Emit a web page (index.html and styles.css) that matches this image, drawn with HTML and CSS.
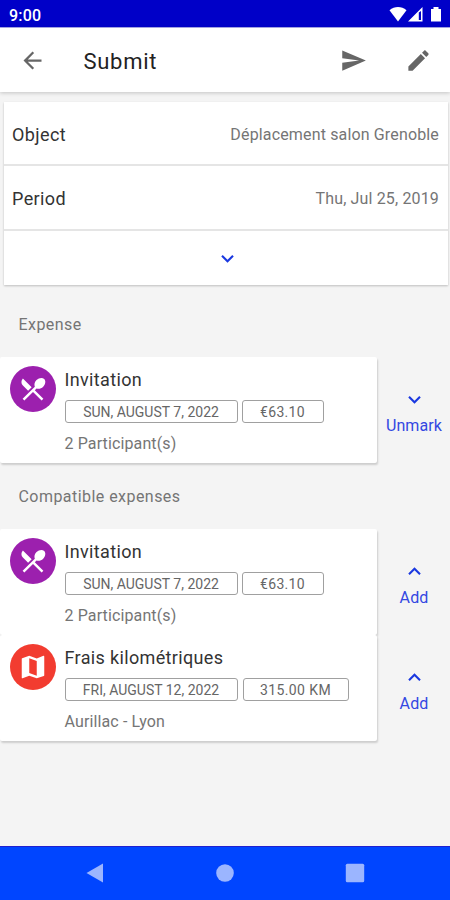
FILE: index.html
```html
<!DOCTYPE html>
<html lang="en">
<head>
<meta charset="utf-8">
<title>Submit</title>
<link rel="stylesheet" href="styles.css">
</head>
<body>
<svg class="defs" aria-hidden="true">
  <symbol id="down" viewBox="0 0 24 24"><path d="M16.59 8.59 12 13.17 7.41 8.59 6 10l6 6 6-6z"/></symbol>
  <symbol id="up" viewBox="0 0 24 24"><path d="m12 8-6 6 1.41 1.41L12 10.83l4.59 4.58L18 14z"/></symbol>
  <symbol id="dining" viewBox="0 0 24 24"><path d="M8.1 13.34l2.83-2.83L3.91 3.5c-1.56 1.56-1.56 4.09 0 5.66l4.19 4.18zm6.78-1.81c1.53.71 3.68.21 5.27-1.38 1.91-1.91 2.28-4.65.81-6.12-1.46-1.46-4.2-1.1-6.12.81-1.59 1.59-2.09 3.74-1.38 5.27L3.7 19.87l1.41 1.41L12 14.41l6.88 6.88 1.41-1.41L13.41 13l1.47-1.47z"/></symbol>
  <symbol id="map" viewBox="0 0 24 24"><path d="M20.5 3l-.16.03L15 5.1 9 3 3.36 4.9c-.21.07-.36.25-.36.48V20.5c0 .28.22.5.5.5l.16-.03L9 18.9l6 2.1 5.64-1.9c.21-.07.36-.25.36-.48V3.5c0-.28-.22-.5-.5-.5zM15 19l-6-2.11V5l6 2.11V19z"/></symbol>
</svg>
<header class="status">
  <span class="time">9:00</span>
  <svg class="status-icons" viewBox="0 0 54 18"><path d="M.5 4.2C5.5-.2 12.500-.2 17.500 4.200L9 15.500z"/><path fill-rule="evenodd" d="M19 15.500 33.500 1V15.500zM29.800 6.500V14H32V5z"/><path d="M42 3h2.500V1h5v2H52v12.500H42z"/></svg>
</header>
<nav class="appbar">
  <svg class="icon" viewBox="0 0 24 24"><path d="M20 11H7.83l5.59-5.59L12 4l-8 8 8 8 1.410-1.410L7.830 13H20z"/></svg>
  <h1>Submit</h1>
  <svg class="icon" viewBox="0 0 24 24"><path d="M2.010 21L23 12 2.010 3 2 10l15 2-15 2z"/></svg>
  <svg class="icon edit" viewBox="0 0 24 24"><path d="M3 17.250V21h3.750L17.810 9.940l-3.750-3.750zM20.710 7.040c.39-.39.39-1.020 0-1.410l-2.340-2.340c-.39-.39-1.020-.39-1.410 0l-1.830 1.830 3.750 3.750z"/></svg>
</nav>
<main>
  <section class="summary">
    <div class="row"><span class="label">Object</span><span class="value">Déplacement salon Grenoble</span></div>
    <div class="row"><span class="label">Period</span><span class="value">Thu, Jul 25, 2019</span></div>
    <div class="row more"><svg class="chevron"><use href="#down"/></svg></div>
  </section>
  <h2>Expense</h2>
  <section class="list">
    <div class="item">
      <article class="card">
        <span class="avatar"><svg><use href="#dining"/></svg></span>
        <div class="info">
          <h3>Invitation</h3>
          <div class="chips"><span class="chip date">SUN, AUGUST 7, 2022</span><span class="chip price">€63.10</span></div>
          <p>2 Participant(s)</p>
        </div>
      </article>
      <div class="action"><svg class="chevron"><use href="#down"/></svg><span>Unmark</span></div>
    </div>
  </section>
  <h2 class="compatible">Compatible expenses</h2>
  <section class="list">
    <div class="item">
      <article class="card">
        <span class="avatar"><svg><use href="#dining"/></svg></span>
        <div class="info">
          <h3>Invitation</h3>
          <div class="chips"><span class="chip date">SUN, AUGUST 7, 2022</span><span class="chip price">€63.10</span></div>
          <p>2 Participant(s)</p>
        </div>
      </article>
      <div class="action"><svg class="chevron"><use href="#up"/></svg><span>Add</span></div>
    </div>
    <div class="item">
      <article class="card">
        <span class="avatar red"><svg><use href="#map"/></svg></span>
        <div class="info">
          <h3>Frais kilométriques</h3>
          <div class="chips"><span class="chip date">FRI, AUGUST 12, 2022</span><span class="chip distance">315.00 KM</span></div>
          <p>Aurillac - Lyon</p>
        </div>
      </article>
      <div class="action"><svg class="chevron"><use href="#up"/></svg><span>Add</span></div>
    </div>
  </section>
</main>
<footer class="navbar">
  <svg viewBox="0 0 20 20"><path d="M1.500 10 18 .5v19z"/></svg>
  <svg viewBox="0 0 20 20"><circle cx="10" cy="10" r="8.800"/></svg>
  <svg viewBox="0 0 20 20"><rect x=".8" y=".8" width="18.400" height="18.400" rx="1.500"/></svg>
</footer>
</body>
</html>
```
FILE: styles.css
```css
* { box-sizing: border-box; }
body {
  margin: 0;
  height: 900px;
  display: flex;
  flex-direction: column;
  background: #f4f4f4;
  font-family: Roboto, sans-serif;
  color: #333;
  overflow: hidden;
}
h1, h2, h3, p { margin: 0; font-weight: 400; }
svg { display: block; fill: currentColor; flex: none; }
.defs { display: none; }

.status {
  height: 28px;
  flex: none;
  display: flex;
  justify-content: space-between;
  padding: 6px 7px 0 9px;
  background: #0000c8;
  border-bottom: 1px solid #a9a9ed;
  color: #fff;
}
.time { font-size: 16px; line-height: 19px; font-weight: 500; letter-spacing: .2px; }
.status-icons { width: 54px; height: 18px; }

.appbar {
  height: 64px;
  flex: none;
  display: flex;
  align-items: center;
  padding: 0 19px;
  background: #fff;
  box-shadow: 0 1px 4px rgba(0, 0, 0, .2);
  color: #666;
}
.appbar h1 {
  flex: 1;
  padding: 3px 0 0 37.5px;
  font-size: 22px;
  line-height: 28px;
  letter-spacing: .7px;
  color: #222;
}
.icon { width: 27px; height: 27px; }
.edit { margin: 0 -1px 0 38px; }

main { flex: 1; padding-top: 10px; }
.summary {
  margin: 0 2px 0 4px;
  background: #fff;
  box-shadow: 0 1px 2px rgba(0, 0, 0, .22);
}
.row {
  height: 64px;
  display: flex;
  align-items: center;
  justify-content: space-between;
  padding: 2px 9px 0 8px;
  border-bottom: 2px solid #e5e5e5;
}
.row + .row { height: 65px; padding-top: 1px; }
.row + .row.more {
  height: 54px;
  justify-content: center;
  border: 0;
  padding: 0 9px 0 12px;
}
.label { font-size: 18px; letter-spacing: .4px; }
.value { font-size: 16px; letter-spacing: .15px; color: #757575; }
.chevron { width: 25px; height: 25px; color: #1a38e0; }

h2 {
  height: 72px;
  padding: 29px 0 0 18.5px;
  font-size: 16px;
  line-height: 22px;
  letter-spacing: .45px;
  color: #757575;
}
h2.compatible { height: 66px; padding-top: 23px; }

.item { display: flex; height: 106px; }
.card {
  width: 377px;
  display: flex;
  padding: 9px 0 0 9.5px;
  background: #fff;
  border-radius: 2px;
  box-shadow: 1px 2px 2px rgba(0, 0, 0, .16);
}
.avatar {
  width: 46px;
  height: 46px;
  display: flex;
  align-items: center;
  justify-content: center;
  border-radius: 50%;
  background: #9c20ae;
  color: #fff;
}
.avatar.red { background: #f23c30; }
.avatar svg { width: 30px; height: 30px; }
.info { padding-left: 9px; }
h3 { padding-top: 1px; font-size: 18px; line-height: 26px; letter-spacing: .35px; }
.chips { display: flex; gap: 4px; margin-top: 7px; }
.chip {
  height: 23px;
  border: 1px solid #a0a0a0;
  border-radius: 3px;
  text-align: center;
  font-size: 14px;
  line-height: 22px;
  color: #666;
}
.date { width: 173px; }
.price { width: 82px; letter-spacing: .3px; }
.distance { width: 106px; margin-left: 1px; letter-spacing: .4px; }
.info p { margin-top: 10px; font-size: 16px; line-height: 22px; letter-spacing: .12px; color: #757575; }

.action {
  flex: 1;
  display: flex;
  flex-direction: column;
  align-items: center;
  padding: 30px 0 0 1px;
  font-size: 16px;
  line-height: 22px;
  letter-spacing: .1px;
  color: #3347e2;
}
.action span { margin-top: 3px; }

.navbar {
  height: 54px;
  flex: none;
  display: flex;
  justify-content: space-between;
  align-items: center;
  padding: 0 85px 2px;
  background: #0045ff;
  border-top: 1px solid #2020d0;
  color: #9bb5ff;
}
.navbar svg { width: 20px; height: 20px; }
```
